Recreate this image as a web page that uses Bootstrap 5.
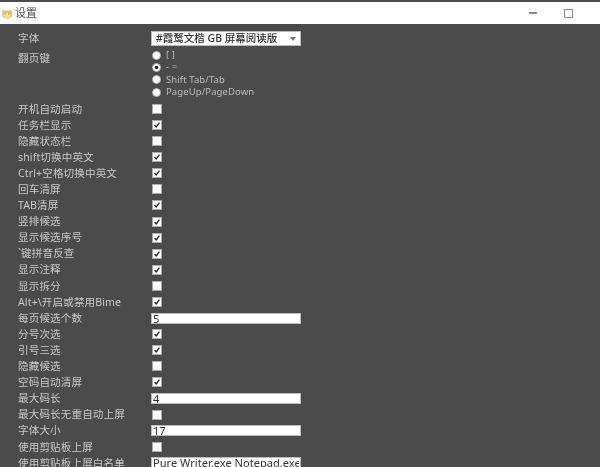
<!DOCTYPE html>
<html lang="zh">
<head>
<meta charset="utf-8">
<title>设置</title>
<link href="https://cdn.jsdelivr.net/npm/bootstrap@5.3.0/dist/css/bootstrap.min.css" rel="stylesheet">
<style>
html,body{height:467px;overflow:hidden;background:#4b4b4b}
body{font-family:"Noto Sans","Noto Sans CJK SC",sans-serif;font-size:10.6px;letter-spacing:.1px;color:#c9c9c9;filter:blur(.5px)}
.top-strip{height:2px;background:#4a4d4d}
.title-bar{height:22px;background:#fff;color:#555;padding-left:2px;font-size:11px;gap:3px}
.win-min{width:8px;height:1.5px;background:#888;position:absolute;left:529px;top:12px}
.win-max{width:9px;height:9px;border:1.5px solid #888;position:absolute;left:564px;top:9px}
.settings{padding:7px 0 0 18px;display:grid;grid-template-columns:133px 150px;grid-template-rows:15.5px 54.3px;grid-auto-rows:16.1px;align-items:center;line-height:1}
.settings .form-select,.settings .form-control{min-height:0;border-radius:0;border:1px solid #bbb;background-color:#fff;color:#333;padding:0 1px;font-size:11.1px;letter-spacing:0;box-shadow:none}
.settings .form-select{height:15px;line-height:13px;font-size:10.5px;font-weight:500;padding-left:4px;background-position:right 4px center;background-size:6px 4px;--bs-form-select-bg-img:url("data:image/svg+xml,%3csvg xmlns='http://www.w3.org/2000/svg' viewBox='0 0 6 4'%3e%3cpath fill='%23777' d='M0 0h6L3 4z'/%3e%3c/svg%3e")}
.settings .form-control{height:11px;line-height:13px;overflow:hidden}
.tall-label{align-self:start;padding-top:6px}
.radio-stack{align-self:start;font-size:9.5px;color:#bdbdbd;line-height:12.3px;padding-top:2.5px}
.radio-line{display:flex;align-items:center;gap:5px;height:12.3px}
.settings .form-check-input{margin:0;border:1px solid #aaa;background-color:#fff;flex:none;box-shadow:none;opacity:1}
.settings .form-check-input[type=checkbox]{width:10px;height:10px;border-radius:0;display:block;margin-left:1px}
.settings .form-check-input[type=radio]{width:9px;height:9px;margin-left:1px}
.settings .form-check-input:checked{background-color:#fff;border-color:#aaa}
.settings .form-check-input:checked[type=checkbox]{--bs-form-check-bg-image:url("data:image/svg+xml,%3csvg xmlns='http://www.w3.org/2000/svg' viewBox='0 0 10 10'%3e%3cpath fill='none' stroke='%23222' stroke-width='1.7' d='M2 5l2 2.4L8 2'/%3e%3c/svg%3e");background-size:100% 100%}
.settings .form-check-input:checked[type=radio]{--bs-form-check-bg-image:url("data:image/svg+xml,%3csvg xmlns='http://www.w3.org/2000/svg' viewBox='-4 -4 8 8'%3e%3ccircle r='2' fill='%23222'/%3e%3c/svg%3e")}
</style>
</head>
<body>
<div class="top-strip"></div>
<div class="title-bar d-flex align-items-center position-relative">
  <svg width="10" height="11" viewBox="0 0 10 11"><path d="M.5 1.500L2.500 2.800Q5 2 7.500 2.800L9.500 1.500 10 6.500Q9.500 10.500 5 10.500T0 6.500Z" fill="#eabb62"/><ellipse cx="5" cy="7" rx="3.300" ry="2.600" fill="#fbe3ae"/><circle cx="3.300" cy="6" r=".7" fill="#a9742c"/><circle cx="6.700" cy="6" r=".7" fill="#a9742c"/></svg>
  <span>设置</span>
</div>
<div class="win-min"></div>
<div class="win-max"></div>
<form class="settings">
  <label>字体</label>
  <select class="form-select"><option>#霞鹜文楷 GB 屏幕阅读版</option></select>
  <label class="tall-label">翻页键</label>
  <div class="radio-stack">
    <div class="radio-line"><input class="form-check-input" type="radio" name="pg"><span>[ ]</span></div>
    <div class="radio-line"><input class="form-check-input" type="radio" name="pg" checked><span>- =</span></div>
    <div class="radio-line"><input class="form-check-input" type="radio" name="pg"><span>Shift Tab/Tab</span></div>
    <div class="radio-line"><input class="form-check-input" type="radio" name="pg"><span>PageUp/PageDown</span></div>
  </div>
  <label>开机自动启动</label><input class="form-check-input" type="checkbox">
  <label>任务栏显示</label><input class="form-check-input" type="checkbox" checked>
  <label>隐藏状态栏</label><input class="form-check-input" type="checkbox">
  <label>shift切换中英文</label><input class="form-check-input" type="checkbox" checked>
  <label>Ctrl+空格切换中英文</label><input class="form-check-input" type="checkbox" checked>
  <label>回车清屏</label><input class="form-check-input" type="checkbox">
  <label>TAB清屏</label><input class="form-check-input" type="checkbox" checked>
  <label>竖排候选</label><input class="form-check-input" type="checkbox" checked>
  <label>显示候选序号</label><input class="form-check-input" type="checkbox" checked>
  <label>`键拼音反查</label><input class="form-check-input" type="checkbox" checked>
  <label>显示注释</label><input class="form-check-input" type="checkbox" checked>
  <label>显示拆分</label><input class="form-check-input" type="checkbox">
  <label>Alt+\开启或禁用Bime</label><input class="form-check-input" type="checkbox" checked>
  <label>每页候选个数</label><input class="form-control" type="text" value="5">
  <label>分号次选</label><input class="form-check-input" type="checkbox" checked>
  <label>引号三选</label><input class="form-check-input" type="checkbox" checked>
  <label>隐藏候选</label><input class="form-check-input" type="checkbox">
  <label>空码自动清屏</label><input class="form-check-input" type="checkbox" checked>
  <label>最大码长</label><input class="form-control" type="text" value="4">
  <label>最大码长无重自动上屏</label><input class="form-check-input" type="checkbox">
  <label>字体大小</label><input class="form-control" type="text" value="17">
  <label>使用剪贴板上屏</label><input class="form-check-input" type="checkbox">
  <label>使用剪贴板上屏白名单</label><input class="form-control" type="text" value="Pure Writer.exe Notepad.exe">
</form>
</body>
</html>
